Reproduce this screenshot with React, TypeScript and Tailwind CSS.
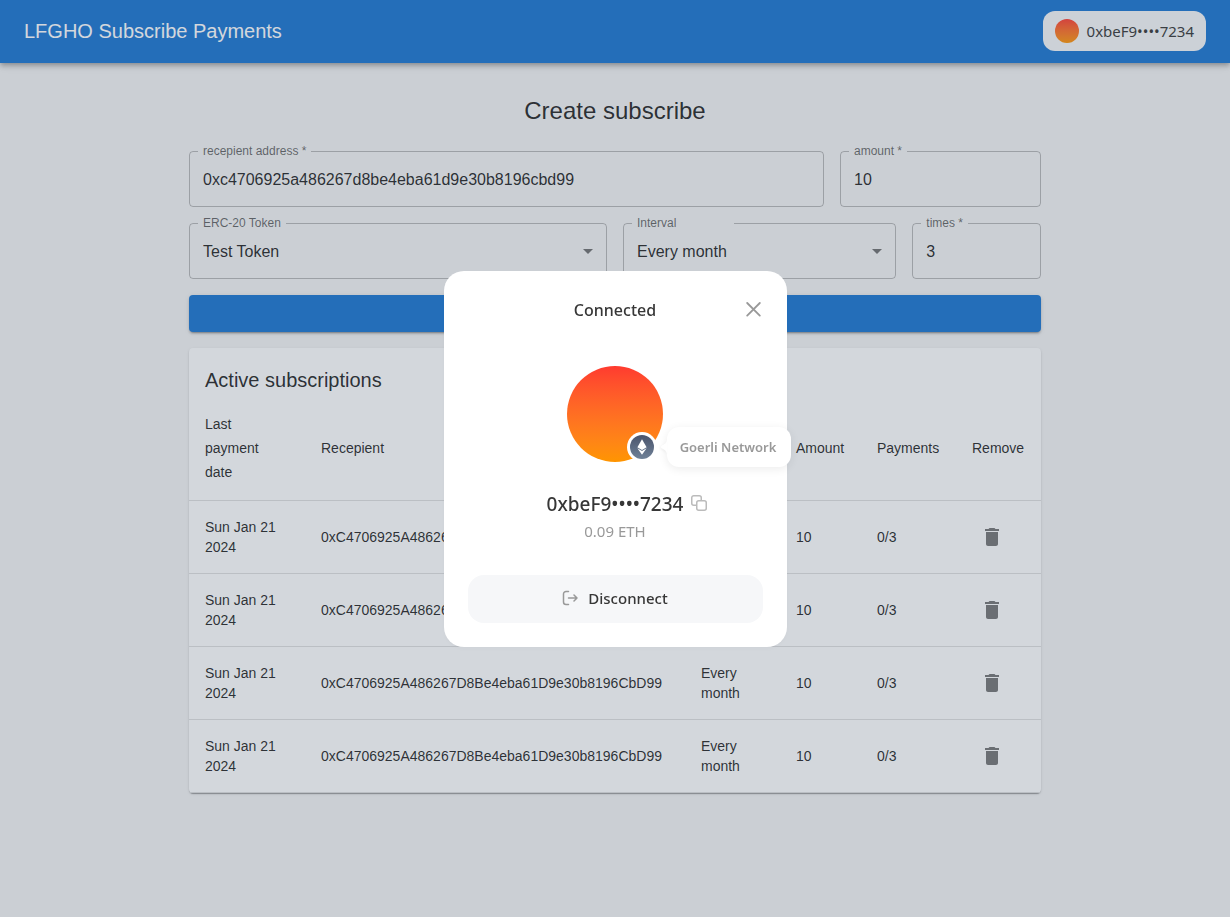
import { useId, useState, type ReactNode } from 'react';

const account = '0xbeF9••••7234';

const subscriptions = [1, 2, 3, 4].map((id) => ({
  id,
  date: 'Sun Jan 21 2024',
  recepient: '0xC4706925A486267D8Be4eba61D9e30b8196CbD99',
  interval: 'Every month',
  amount: 10,
  payments: '0/3',
}));

type FieldProps = {
  label: string;
  required?: boolean;
  className: string;
  legendClassName?: string;
  children: (id: string) => ReactNode;
};

function Field({ label, required, className, legendClassName = '', children }: FieldProps) {
  const id = useId();

  return (
    <fieldset className={`min-w-0 rounded border border-black/25 pb-[5px] ${className}`}>
      <legend className={`ml-2 px-[5px] text-xs leading-4 text-black/60 ${legendClassName}`}>
        <label htmlFor={id}>
          {label}
          {required && ' *'}
        </label>
      </legend>
      {children(id)}
    </fieldset>
  );
}

function TextInput({ id, initial }: { id: string; initial: string }) {
  const [value, setValue] = useState(initial);

  return (
    <input
      id={id}
      required
      value={value}
      onChange={(e) => setValue(e.target.value)}
      className="block h-[42px] w-full bg-transparent px-[13px] text-base text-black/87 outline-none"
    />
  );
}

function SelectInput({ id, options }: { id: string; options: string[] }) {
  return (
    <div className="relative">
      <select
        id={id}
        className="block h-[42px] w-full appearance-none bg-transparent pl-[13px] pr-8 text-base text-black/87 outline-none"
      >
        {options.map((option) => (
          <option key={option}>{option}</option>
        ))}
      </select>
      <svg
        className="pointer-events-none absolute right-1.5 top-2 size-6 fill-black/54"
        viewBox="0 0 24 24"
        aria-hidden="true"
      >
        <path d="m7 10 5 5 5-5z" />
      </svg>
    </div>
  );
}

function Header() {
  return (
    <header className="flex h-[63px] items-center justify-between bg-[#1976d2] px-6 pb-px shadow-[0_2px_4px_-1px_rgba(0,0,0,0.2),0_4px_5px_0_rgba(0,0,0,0.14),0_1px_10px_0_rgba(0,0,0,0.12)]">
      <h1 className="text-xl text-white">LFGHO Subscribe Payments</h1>
      <button
        type="button"
        className="flex h-10 items-center gap-2 rounded-xl bg-[#f6f7f9] px-3 font-['Noto_Sans',sans-serif] text-[15px] text-[#373737]"
      >
        <span className="size-6 rounded-full bg-linear-to-b from-[#ff3a2f] to-[#ff9500]" />
        {account}
      </button>
    </header>
  );
}

function SubscribeForm() {
  return (
    <form className="grid grid-cols-12 gap-x-4 gap-y-2" onSubmit={(e) => e.preventDefault()}>
      <Field label="recepient address" required className="col-span-9">
        {(id) => <TextInput id={id} initial="0xc4706925a486267d8be4eba61d9e30b8196cbd99" />}
      </Field>
      <Field label="amount" required className="col-span-3">
        {(id) => <TextInput id={id} initial="10" />}
      </Field>
      <Field label="ERC-20 Token" className="col-span-6">
        {(id) => <SelectInput id={id} options={['Test Token', 'GHO']} />}
      </Field>
      <Field label="Interval" className="col-span-4" legendClassName="w-[102px]">
        {(id) => <SelectInput id={id} options={['Every month', 'Every week', 'Every day']} />}
      </Field>
      <Field label="times" required className="col-span-2">
        {(id) => <TextInput id={id} initial="3" />}
      </Field>
      <button
        type="submit"
        aria-label="Create"
        className="col-span-12 mt-2 h-[37px] rounded bg-[#1976d2] shadow-[0_3px_1px_-2px_rgba(0,0,0,0.2),0_2px_2px_0_rgba(0,0,0,0.14),0_1px_5px_0_rgba(0,0,0,0.12)]"
      />
    </form>
  );
}

function SubscriptionsTable() {
  return (
    <section className="mt-4 rounded bg-white shadow-[0_2px_1px_-1px_rgba(0,0,0,0.2),0_1px_1px_0_rgba(0,0,0,0.14),0_1px_3px_0_rgba(0,0,0,0.12)]">
      <h2 className="px-4 pt-4 text-xl leading-8">Active subscriptions</h2>
      <table className="w-full table-fixed text-left text-sm leading-5">
        <colgroup>
          <col className="w-[116px]" />
          <col />
          <col className="w-[95px]" />
          <col className="w-[81px]" />
          <col className="w-[95px]" />
          <col className="w-[85px]" />
        </colgroup>
        <thead>
          <tr className="border-b border-[#e0e0e0] leading-6 *:p-4 *:font-normal">
            <th scope="col">Last payment date</th>
            <th scope="col">Recepient</th>
            <th scope="col" aria-label="Interval" />
            <th scope="col">Amount</th>
            <th scope="col">Payments</th>
            <th scope="col">Remove</th>
          </tr>
        </thead>
        <tbody>
          {subscriptions.map((item) => (
            <tr key={item.id} className="border-b border-[#e0e0e0] *:p-4">
              <td>{item.date}</td>
              <td>{item.recepient}</td>
              <td>{item.interval}</td>
              <td>{item.amount}</td>
              <td>{item.payments}</td>
              <td>
                <button
                  type="button"
                  aria-label="Remove subscription"
                  className="flex size-10 items-center justify-center rounded-full"
                >
                  <svg className="size-6 fill-black/54" viewBox="0 0 24 24" aria-hidden="true">
                    <path d="M6 19c0 1.1.9 2 2 2h8c1.1 0 2-.9 2-2V7H6zM19 4h-3.5l-1-1h-5l-1 1H5v2h14z" />
                  </svg>
                </button>
              </td>
            </tr>
          ))}
        </tbody>
      </table>
    </section>
  );
}

function EthereumBadge() {
  return (
    <svg className="size-[30px]" viewBox="0 0 30 30" aria-hidden="true">
      <defs>
        <linearGradient id="eth" x1="0" y1="0" x2="0" y2="1">
          <stop offset="0" stopColor="#4a546c" />
          <stop offset="1" stopColor="#6f8197" />
        </linearGradient>
      </defs>
      <circle cx="15" cy="15" r="15" fill="#fff" />
      <circle cx="15" cy="15" r="12" fill="url(#eth)" />
      <path d="M15 7.300l-4.600 7.900 4.600 2.700 4.600-2.700z" fill="#fff" />
      <path d="M10.400 16.200L15 22.700l4.600-6.500-4.600 2.700z" fill="#fff" />
    </svg>
  );
}

function ConnectedModal() {
  return (
    <div className="fixed inset-0 flex items-center justify-center bg-[#47586b]/24 font-['Noto_Sans',sans-serif] text-[#373737]">
      <div
        role="dialog"
        aria-modal="true"
        aria-labelledby="modal-title"
        className="w-[343px] rounded-[20px] bg-white px-6 pb-6 pt-[27px] shadow-[0_2px_4px_rgba(0,0,0,0.02)]"
      >
        <div className="grid h-6 grid-cols-[20px_1fr_20px] items-center">
          <h2 id="modal-title" className="col-start-2 text-center text-base font-medium">
            Connected
          </h2>
          <button type="button" aria-label="Close" className="flex size-5 items-center justify-center">
            <svg className="size-4" viewBox="0 0 16 16" fill="none" stroke="#999" strokeWidth="1.8" strokeLinecap="round">
              <path d="M2.200 1L14.800 13.600M14.800 1L2.200 13.600" />
            </svg>
          </button>
        </div>

        <div className="relative mx-auto mt-11 size-24 rounded-full bg-linear-to-b from-[#ff3a2f] to-[#ff9500]">
          <div className="absolute bottom-0 right-1.5">
            <EthereumBadge />
          </div>
          {/* Network tooltip */}
          <div
            role="tooltip"
            className="absolute -bottom-[5px] left-[100px] flex h-10 w-[124px] items-center justify-center whitespace-nowrap rounded-xl bg-white pr-0.5 pt-0.5 text-[13px] font-semibold text-[#999] shadow-[0_2px_10px_rgba(0,0,0,0.08)]"
          >
            <svg
              className="absolute right-full top-3 h-4 w-2 fill-white drop-shadow-[-1px_1px_1px_rgba(0,0,0,0.05)]"
              viewBox="0 0 8 16"
              aria-hidden="true"
            >
              <path d="M8 0v16C8 12 6 11 3 9.500Q1 8 3 6.500C6 5 8 4 8 0z" />
            </svg>
            Goerli Network
          </div>
        </div>

        <div className="mt-7 flex h-7 items-center justify-center">
          <div className="relative text-[19px] leading-7 font-medium">
            {account}
            <button type="button" aria-label="Copy address" className="absolute left-full top-[5px] ml-2">
              <svg className="block size-4" viewBox="0 0 16 16" fill="none" stroke="#bbb" strokeWidth="1.5">
                <rect x="5.750" y="5.750" width="9.500" height="9.500" rx="2" />
                <path d="M10.250 5.500V2.750a2 2 0 0 0-2-2h-5.500a2 2 0 0 0-2 2v5.500a2 2 0 0 0 2 2H5.500" />
              </svg>
            </button>
          </div>
        </div>
        <p className="mt-px text-center text-[15px] leading-6 text-[#999]">0.09 ETH</p>

        <button
          type="button"
          className="mt-8 flex h-12 w-full items-center justify-center gap-2.5 rounded-2xl bg-[#f6f7f9] pb-px text-[15px] font-medium"
        >
          <svg
            className="size-4"
            viewBox="0 0 16 16"
            fill="none"
            stroke="#999"
            strokeWidth="1.500"
            strokeLinecap="round"
            strokeLinejoin="round"
          >
            <path d="M6.500 1.500H4a2.500 2.500 0 0 0-2.500 2.500v8A2.500 2.500 0 0 0 4 14.500h2.500M6.500 8h8.500M12 5l3 3-3 3" />
          </svg>
          Disconnect
        </button>
      </div>
    </div>
  );
}

export default function App() {
  return (
    <div className="min-h-screen bg-[#f5f5f5] font-['Liberation_Sans',Arial,sans-serif] text-black/87">
      <Header />
      <main className="mx-auto max-w-[900px] px-6 pb-8 pt-8">
        <h2 className="mb-4 text-center text-2xl">Create subscribe</h2>
        <SubscribeForm />
        <SubscriptionsTable />
      </main>
      <ConnectedModal />
    </div>
  );
}
